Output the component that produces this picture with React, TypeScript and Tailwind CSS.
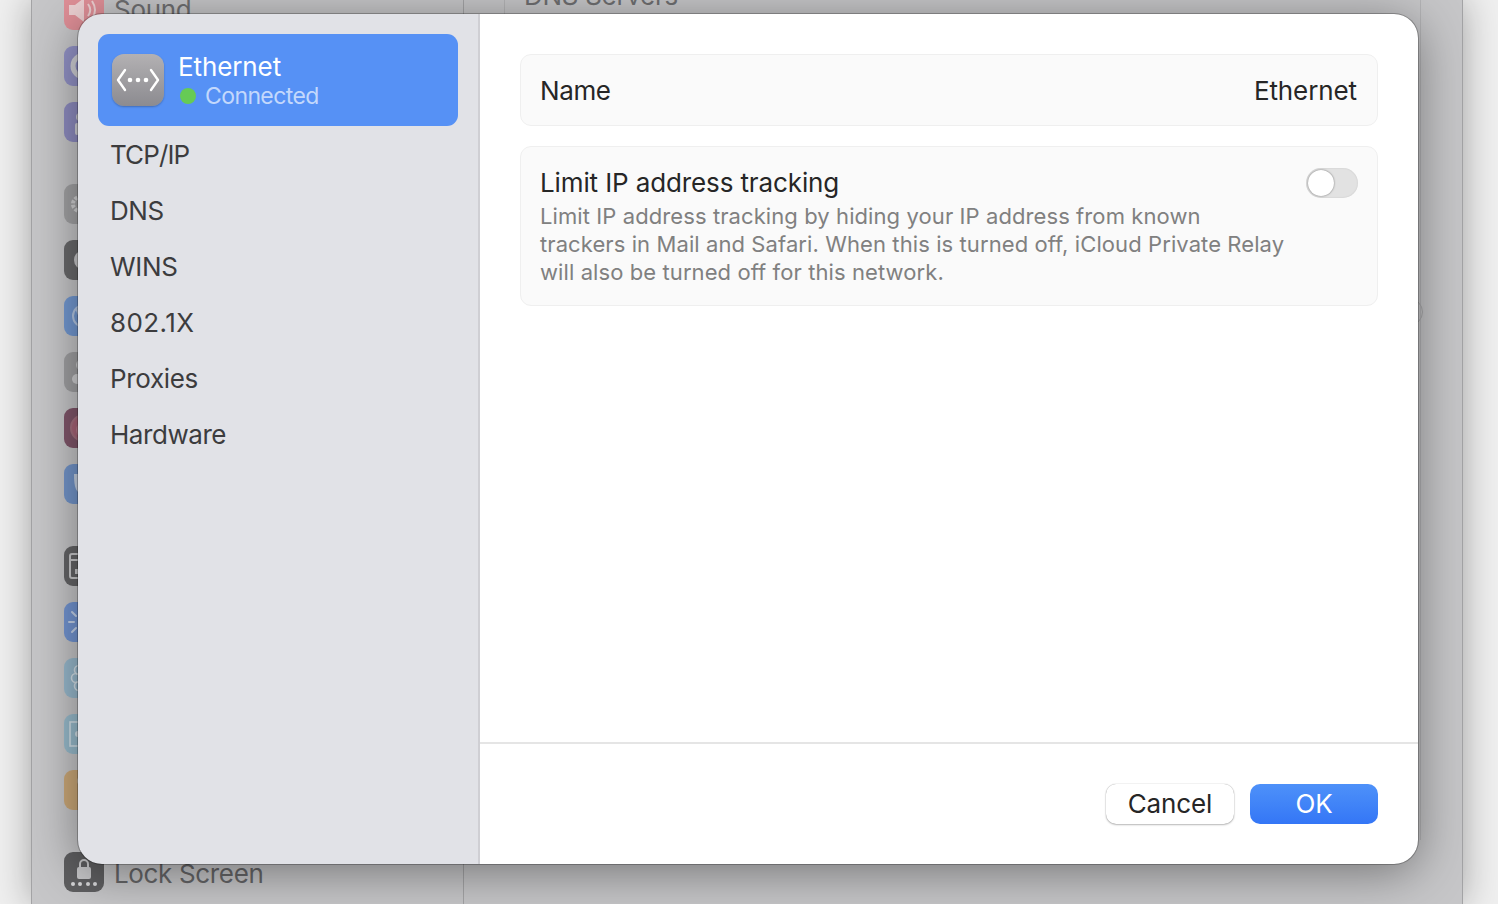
import type { ReactNode } from "react";

const font = { fontFamily: "Inter, 'Noto Sans', sans-serif" };

function AppIcon({ className, children }: { className: string; children?: ReactNode }) {
  return (
    <div className={`w-10 h-10 rounded-[9px] shrink-0 overflow-hidden ${className}`}>
      <svg width="40" height="40" viewBox="0 0 40 40" fill="none">
        {children}
      </svg>
    </div>
  );
}

function BackSidebar() {
  const line = "#d0d0d6";
  return (
    <div className="w-[432px] shrink-0 h-[914px] border-r border-[#a4a4a6] pl-8 -mt-[10px]">
      <div className="flex flex-col gap-4">
        <div className="flex items-center gap-2.5">
          <AppIcon className="bg-[#df8f97]">
            <path d="M5 15h6l9-7v24l-9-7H5z" fill="#ecd0d2" />
            <path d="M24 14c3 4 3 8 0 12M28 11c4 6 4 12 0 18" stroke="#ecd0d2" strokeWidth="2" />
          </AppIcon>
          <span className="text-[26px] leading-8 tracking-[-0.3px] text-[#6f6f71]">Sound</span>
        </div>
        <AppIcon className="bg-[#9292c6]">
          <circle cx="20" cy="20" r="11" stroke={line} strokeWidth="5" />
        </AppIcon>
        <AppIcon className="bg-[#8e8cc0]">
          <circle cx="16" cy="15" r="4" fill={line} />
          <rect x="11" y="21" width="4" height="12" rx="2" fill={line} />
        </AppIcon>
      </div>
      <div className="flex flex-col gap-4 mt-[42px]">
        <AppIcon className="bg-[#a2a2a4]">
          <circle cx="16" cy="20" r="7" stroke="#d0d0d2" strokeWidth="4" strokeDasharray="3 1.5" />
        </AppIcon>
        <AppIcon className="bg-[#69696b]">
          <circle cx="20" cy="20" r="10" fill="#c9c9cb" />
        </AppIcon>
        <AppIcon className="bg-[#7399d2]">
          <circle cx="20" cy="20" r="11" stroke="#b5c8e4" strokeWidth="2" />
          <path d="M12 12l6 14" stroke="#b5c8e4" strokeWidth="2" />
        </AppIcon>
        <AppIcon className="bg-[#a0a0a2]">
          <circle cx="18" cy="13" r="5" stroke="#cfcfd1" strokeWidth="2" />
          <rect x="8" y="22" width="24" height="10" rx="5" fill="#cfcfd1" />
        </AppIcon>
        <AppIcon className="bg-[#80566a]">
          <circle cx="20" cy="20" r="13" stroke="#a5707f" strokeWidth="2" fill="#a86478" />
          <circle cx="20" cy="22" r="8" fill="#bb7c8c" />
        </AppIcon>
        <AppIcon className="bg-[#7395ca]">
          <path d="M10 10c0 14 2 20 10 20V10z" fill="#c5d0e2" />
        </AppIcon>
      </div>
      <div className="flex flex-col gap-4 mt-[42px]">
        <AppIcon className="bg-[#656567]">
          <rect x="6" y="8" width="22" height="24" rx="2" stroke="#c9c9cb" strokeWidth="2" />
          <path d="M6 14h22" stroke="#c9c9cb" strokeWidth="2" />
          <rect x="11" y="23" width="5" height="5" fill="#c9c9cb" />
        </AppIcon>
        <AppIcon className="bg-[#7395d2]">
          <path d="M5 20h5M8 10l4 4M8 30l4-4" stroke="#c5d3ea" strokeWidth="2" strokeLinecap="round" />
        </AppIcon>
        <AppIcon className="bg-[#98b9cd]">
          <circle cx="12" cy="20" r="4.5" stroke="#d3e0e8" strokeWidth="1.6" />
          <circle cx="15" cy="12" r="4.5" stroke="#d3e0e8" strokeWidth="1.6" />
          <circle cx="15" cy="28" r="4.5" stroke="#d3e0e8" strokeWidth="1.6" />
        </AppIcon>
        <AppIcon className="bg-[#98bbcc]">
          <rect x="6" y="8" width="26" height="24" stroke="#d3e0e8" strokeWidth="1.6" />
          <circle cx="14" cy="20" r="3" fill="#d3e0e8" />
        </AppIcon>
        <AppIcon className="bg-[#cba878]">
          <circle cx="17" cy="11" r="4" fill="#dfcdb2" />
        </AppIcon>
      </div>
      <div className="flex items-center gap-2.5 mt-[42px]">
        <AppIcon className="bg-[#5f5f61]">
          <path d="M16 16v-4a4 4 0 0 1 8 0v4" stroke="#c9c9cb" strokeWidth="2" />
          <rect x="13" y="15" width="14" height="12" rx="2" fill="#c9c9cb" />
          <circle cx="9" cy="32" r="2" fill="#d8d8da" />
          <circle cx="16" cy="32" r="2" fill="#d8d8da" />
          <circle cx="24" cy="32" r="2" fill="#d8d8da" />
          <circle cx="31" cy="32" r="2" fill="#d8d8da" />
        </AppIcon>
        <span className="text-[26px] leading-8 tracking-[-0.35px] text-[#666668] translate-y-0.5">Lock Screen</span>
      </div>
    </div>
  );
}

function BackWindow() {
  return (
    <div className="flex flex-1 h-full bg-[#c6c6c8] border-x border-[#a3a3a5] shadow-[0_0_34px_rgba(0,0,0,0.32)]">
      <BackSidebar />
      <div className="flex-1 pl-10 pr-10 h-full">
        <div className="h-[860px] w-[917px] border-x border-[#b4b4b6] pl-[19px] relative">
          <div className="text-[26px] leading-8 tracking-[-0.3px] -mt-[20px] text-[#6f6f71]">DNS Servers</div>
          <div className="absolute -right-[3px] top-[318px] w-7 h-7 rounded-full border border-[#a9a9ab]" />
        </div>
      </div>
    </div>
  );
}

function EthernetIcon() {
  return (
    <div className="w-[52px] h-[52px] rounded-[12px] bg-gradient-to-b from-[#b3b1b3] to-[#8c8b90] flex items-center justify-center shadow-[0_1px_2px_rgba(0,0,0,0.25)] shrink-0">
      <svg width="44" height="26" viewBox="0 0 44 26" fill="none">
        <path d="M9 3 2 13l7 10M35 3l7 10-7 10" stroke="#fff" strokeWidth="2.4" strokeLinecap="round" strokeLinejoin="round" />
        <circle cx="14" cy="13" r="2.3" fill="#fff" />
        <circle cx="22" cy="13" r="2.3" fill="#fff" />
        <circle cx="30" cy="13" r="2.3" fill="#fff" />
      </svg>
    </div>
  );
}

function Sidebar() {
  const items = [
    { label: "TCP/IP", tracking: "tracking-[-0.9px]" },
    { label: "DNS", tracking: "tracking-[-0.4px]" },
    { label: "WINS", tracking: "tracking-[-0.3px]" },
    { label: "802.1X", tracking: "tracking-[0.4px]" },
    { label: "Proxies", tracking: "tracking-[-0.35px]" },
    { label: "Hardware", tracking: "tracking-[-0.45px]" },
  ];
  return (
    <div className="w-[402px] shrink-0 bg-[#e1e2e7] border-r-2 border-[#cfcfd4] pl-5 pr-[20px] pt-5">
      <div className="h-[92px] rounded-[11px] bg-[#5691f5] flex items-center pl-3.5 gap-3.5">
        <EthernetIcon />
        <div className="flex flex-col pt-0.5">
          <span className="text-[26px] leading-[30px] tracking-[-0.1px] text-white">Ethernet</span>
          <span className="flex items-center gap-[9px] pl-0.5 text-[23px] leading-[28px] tracking-[-0.6px] text-[#c3d8fc]">
            <span className="w-4 h-4 rounded-full bg-[#66cb55]" />
            Connected
          </span>
        </div>
      </div>
      <div className="flex flex-col mt-px">
        {items.map((item) => (
          <div key={item.label} className={`h-14 flex items-center pl-3 pb-0.5 text-[26px] text-[#3c3c3e] ${item.tracking}`}>
            {item.label}
          </div>
        ))}
      </div>
    </div>
  );
}

function Content() {
  return (
    <div className="flex-1 flex flex-col bg-white">
      <div className="flex-1 flex flex-col gap-5 pt-10 px-10">
        <div className="h-[72px] rounded-[11px] bg-[#fafafa] border border-[#efefef] pl-[19px] pr-5 pt-px flex items-center justify-between text-[26px] text-[#262626]">
          <span className="tracking-[-0.4px]">Name</span>
          <span className="tracking-[-0.1px]">Ethernet</span>
        </div>
        <div className="h-[160px] rounded-[11px] bg-[#fafafa] border border-[#efefef] pl-[19px] pr-[19px] pt-[21px] flex justify-between">
          <div>
            <div className="text-[26px] leading-[30px] tracking-[-0.12px] text-[#262626]">Limit IP address tracking</div>
            <div className="mt-[4px] text-[22px] leading-7 tracking-[0.09px] text-[#808080] whitespace-nowrap">
              Limit IP address tracking by hiding your IP address from known
              <br />
              trackers in Mail and Safari. When this is turned off, iCloud Private Relay
              <br />
              will also be turned off for this network.
            </div>
          </div>
          <div className="w-[52px] h-[30px] rounded-full bg-[#e2e2e2] p-[2px] shrink-0 shadow-[inset_0_0_2px_rgba(0,0,0,0.12)]">
            <div className="w-[26px] h-[26px] rounded-full bg-white shadow-[0_0_2px_rgba(0,0,0,0.55)]" />
          </div>
        </div>
      </div>
      <div className="h-[122px] border-t-2 border-[#e5e5e5] flex justify-end gap-4 pt-10 pr-10">
        <button className="w-[128px] h-10 rounded-[10px] bg-white pb-1 text-[26px] tracking-[-0.1px] text-[#262626] shadow-[0_0_1px_rgba(0,0,0,0.4),0_1px_2px_rgba(0,0,0,0.25)]">
          Cancel
        </button>
        <button className="w-[128px] h-10 rounded-[10px] bg-gradient-to-b from-[#4e91f9] to-[#3476f6] pb-1 text-[26px] tracking-[-0.1px] text-white">
          OK
        </button>
      </div>
    </div>
  );
}

export default function App() {
  return (
    <div style={font} className="relative h-[904px] w-[1498px] overflow-hidden bg-[#efefef] flex pl-[31px] pr-[35px]">
      <BackWindow />
      <div className="absolute left-[78px] top-[14px] w-[1340px] h-[850px] rounded-[24px] overflow-hidden flex">
        <Sidebar />
        <Content />
      </div>
      <div className="absolute left-[78px] top-[14px] w-[1340px] h-[850px] rounded-[24px] pointer-events-none shadow-[0_0_0_1px_rgba(0,0,0,0.25),0_8px_50px_rgba(0,0,0,0.42)]" />
    </div>
  );
}
